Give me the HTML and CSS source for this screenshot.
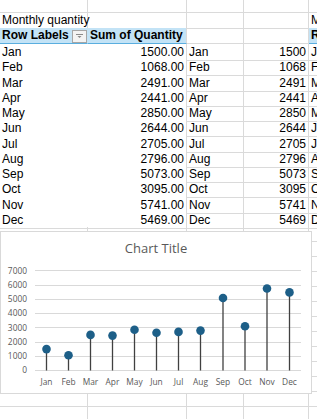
FILE: index.html
```html
<!DOCTYPE html>
<html lang="en">
<head>
    <meta charset="UTF-8">
    <meta name="viewport" content="width=device-width, initial-scale=1.0">
    <title>Monthly quantity</title>
    <link rel="stylesheet" href="styles.css">
</head>
<body>
    <div class="sheet">
        <div class="row top"><div class="cell"></div><div class="cell"></div><div class="cell"></div><div class="cell"></div><div class="cell"></div></div>
        <div class="row caption"><div class="cell">Monthly quantity</div><div class="cell"></div><div class="cell"></div><div class="cell"></div><div class="cell">Monthly quantity</div></div>
        <div class="row head">
            <div class="cell hd first">Row Labels<span class="drop"><svg width="7" height="5" viewBox="0 0 7 5"><rect x="0" y="0" width="7" height="1" fill="#8a8a8a"/><polygon points="1.5,2 5.5,2 3.5,4" fill="#8a8a8a"/></svg></span></div>
            <div class="cell hd">Sum of Quantity</div>
            <div class="cell"></div><div class="cell"></div>
            <div class="cell hd">Row Labels</div>
        </div>
        <div class="row data"><div class="cell pv">Jan</div><div class="cell pv num">1500.00</div><div class="cell">Jan</div><div class="cell num">1500</div><div class="cell">Jan</div></div>
        <div class="row data"><div class="cell pv">Feb</div><div class="cell pv num">1068.00</div><div class="cell">Feb</div><div class="cell num">1068</div><div class="cell">Feb</div></div>
        <div class="row data"><div class="cell pv">Mar</div><div class="cell pv num">2491.00</div><div class="cell">Mar</div><div class="cell num">2491</div><div class="cell">Mar</div></div>
        <div class="row data"><div class="cell pv">Apr</div><div class="cell pv num">2441.00</div><div class="cell">Apr</div><div class="cell num">2441</div><div class="cell">Apr</div></div>
        <div class="row data"><div class="cell pv">May</div><div class="cell pv num">2850.00</div><div class="cell">May</div><div class="cell num">2850</div><div class="cell">May</div></div>
        <div class="row data"><div class="cell pv">Jun</div><div class="cell pv num">2644.00</div><div class="cell">Jun</div><div class="cell num">2644</div><div class="cell">Jun</div></div>
        <div class="row data"><div class="cell pv">Jul</div><div class="cell pv num">2705.00</div><div class="cell">Jul</div><div class="cell num">2705</div><div class="cell">Jul</div></div>
        <div class="row data"><div class="cell pv">Aug</div><div class="cell pv num">2796.00</div><div class="cell">Aug</div><div class="cell num">2796</div><div class="cell">Aug</div></div>
        <div class="row data"><div class="cell pv">Sep</div><div class="cell pv num">5073.00</div><div class="cell">Sep</div><div class="cell num">5073</div><div class="cell">Sep</div></div>
        <div class="row data"><div class="cell pv">Oct</div><div class="cell pv num">3095.00</div><div class="cell">Oct</div><div class="cell num">3095</div><div class="cell">Oct</div></div>
        <div class="row data"><div class="cell pv">Nov</div><div class="cell pv num">5741.00</div><div class="cell">Nov</div><div class="cell num">5741</div><div class="cell">Nov</div></div>
        <div class="row data last"><div class="cell pv">Dec</div><div class="cell pv num">5469.00</div><div class="cell">Dec</div><div class="cell num">5469</div><div class="cell">Dec</div></div>
        <div class="row"><div class="cell"></div><div class="cell"></div><div class="cell"></div><div class="cell"></div><div class="cell"></div></div>
        <div class="row"><div class="cell"></div><div class="cell"></div><div class="cell"></div><div class="cell"></div><div class="cell"></div></div>
        <div class="row"><div class="cell"></div><div class="cell"></div><div class="cell"></div><div class="cell"></div><div class="cell"></div></div>
        <div class="row"><div class="cell"></div><div class="cell"></div><div class="cell"></div><div class="cell"></div><div class="cell"></div></div>
        <div class="row"><div class="cell"></div><div class="cell"></div><div class="cell"></div><div class="cell"></div><div class="cell"></div></div>
        <div class="row"><div class="cell"></div><div class="cell"></div><div class="cell"></div><div class="cell"></div><div class="cell"></div></div>
        <div class="row"><div class="cell"></div><div class="cell"></div><div class="cell"></div><div class="cell"></div><div class="cell"></div></div>
        <div class="row"><div class="cell"></div><div class="cell"></div><div class="cell"></div><div class="cell"></div><div class="cell"></div></div>
        <div class="row"><div class="cell"></div><div class="cell"></div><div class="cell"></div><div class="cell"></div><div class="cell"></div></div>
        <div class="row"><div class="cell"></div><div class="cell"></div><div class="cell"></div><div class="cell"></div><div class="cell"></div></div>
        <div class="row"><div class="cell"></div><div class="cell"></div><div class="cell"></div><div class="cell"></div><div class="cell"></div></div>
        <div class="row"><div class="cell"></div><div class="cell"></div><div class="cell"></div><div class="cell"></div><div class="cell"></div></div>
        <div class="row"><div class="cell"></div><div class="cell"></div><div class="cell"></div><div class="cell"></div><div class="cell"></div></div>

        <!-- chart floats over the cells like an Excel chart object -->
        <div class="chart">
            <svg width="312" height="163" viewBox="0 0 312 163">
                <text class="title" x="156" y="21.5" text-anchor="middle">Chart Title</text>
                <g stroke="#d9d9d9" stroke-width="1">
                    <line x1="35" y1="39.5" x2="301" y2="39.5"/>
                    <line x1="35" y1="54.5" x2="301" y2="54.5"/>
                    <line x1="35" y1="68.5" x2="301" y2="68.5"/>
                    <line x1="35" y1="82.5" x2="301" y2="82.5"/>
                    <line x1="35" y1="96.5" x2="301" y2="96.5"/>
                    <line x1="35" y1="111.5" x2="301" y2="111.5"/>
                    <line x1="35" y1="125.5" x2="301" y2="125.5"/>
                    <line x1="35" y1="139.5" x2="301" y2="139.5"/>
                </g>
                <g class="ylab" text-anchor="end">
                    <text x="27" y="42.5">7000</text>
                    <text x="27" y="57">6000</text>
                    <text x="27" y="71">5000</text>
                    <text x="27" y="85">4000</text>
                    <text x="27" y="99.5">3000</text>
                    <text x="27" y="113.5">2000</text>
                    <text x="27" y="128">1000</text>
                    <text x="27" y="142">0</text>
                </g>
                <g stroke="#404040" stroke-width="1.3">
                    <line x1="46.5" y1="139.5" x2="46.5" y2="118.1"/>
                    <line x1="68.5" y1="139.5" x2="68.5" y2="124.2"/>
                    <line x1="90.5" y1="139.5" x2="90.5" y2="103.9"/>
                    <line x1="112.5" y1="139.5" x2="112.5" y2="104.6"/>
                    <line x1="134.5" y1="139.5" x2="134.5" y2="98.8"/>
                    <line x1="156.5" y1="139.5" x2="156.5" y2="101.7"/>
                    <line x1="178.5" y1="139.5" x2="178.5" y2="100.9"/>
                    <line x1="200.5" y1="139.5" x2="200.5" y2="99.6"/>
                    <line x1="223" y1="139.5" x2="223" y2="67"/>
                    <line x1="245" y1="139.5" x2="245" y2="95.3"/>
                    <line x1="267" y1="139.5" x2="267" y2="57.5"/>
                    <line x1="289.5" y1="139.5" x2="289.5" y2="61.4"/>
                </g>
                <g fill="#1d5f88">
                    <circle cx="46.5" cy="118.1" r="4.3"/>
                    <circle cx="68.5" cy="124.2" r="4.3"/>
                    <circle cx="90.5" cy="103.9" r="4.3"/>
                    <circle cx="112.5" cy="104.6" r="4.3"/>
                    <circle cx="134.5" cy="98.8" r="4.3"/>
                    <circle cx="156.5" cy="101.7" r="4.3"/>
                    <circle cx="178.5" cy="100.9" r="4.3"/>
                    <circle cx="200.5" cy="99.6" r="4.3"/>
                    <circle cx="223" cy="67" r="4.3"/>
                    <circle cx="245" cy="95.3" r="4.3"/>
                    <circle cx="267" cy="57.5" r="4.3"/>
                    <circle cx="289.5" cy="61.4" r="4.3"/>
                </g>
                <g class="xlab" text-anchor="middle">
                    <text x="46.5" y="153.5">Jan</text>
                    <text x="68.5" y="153.5">Feb</text>
                    <text x="90.5" y="153.5">Mar</text>
                    <text x="112.5" y="153.5">Apr</text>
                    <text x="134.5" y="153.5">May</text>
                    <text x="156.5" y="153.5">Jun</text>
                    <text x="178.5" y="153.5">Jul</text>
                    <text x="200.5" y="153.5">Aug</text>
                    <text x="223" y="153.5">Sep</text>
                    <text x="245" y="153.5">Oct</text>
                    <text x="267" y="153.5">Nov</text>
                    <text x="289.5" y="153.5">Dec</text>
                </g>
            </svg>
        </div>
    </div>
</body>
</html>
```

FILE: styles.css
```css
body { margin: 0; overflow: hidden; background: #fff; color: #000; font-family: "Liberation Sans", Arial, sans-serif; font-size: 12px; }
.sheet { position: relative; width: 317px; height: 419px; overflow: hidden; }
.row { display: grid; grid-template-columns: 88px 99px 57px 65px 60px; height: 15px; }
.row.top { height: 13px; }
.row.head { height: 16px; }
.row.data { height: 15.25px; }
.cell { box-sizing: border-box; border-right: 1px solid #dadada; border-bottom: 1px solid #dadada; padding: 0 2px; line-height: 15px; white-space: nowrap; overflow: visible; }
.row.data .cell { line-height: 16px; }
.num { text-align: right; }
.hd { background: #c3e3f6; font-weight: bold; border-bottom-color: #5aaedf; line-height: 15px; }
.hd.first { display: flex; justify-content: space-between; align-items: flex-end; border-right-color: transparent; padding-right: 0; }
.drop { box-sizing: border-box; width: 15px; height: 13px; border: 1px solid #a6a6a6; background: #f3f3f3; display: flex; align-items: center; justify-content: center; }
.pv { border-bottom-color: transparent; }
.pv:first-child { border-right-color: transparent; }
.row.last .pv { border-bottom-color: #dadada; }
.caption .cell:first-child { overflow: visible; }
.chart { position: absolute; left: 0; top: 231px; width: 312px; height: 163px; box-sizing: border-box; background: #fff; border: 1px solid #d9d9d9; }
.chart svg { position: absolute; left: -1px; top: -1px; }
.title { font-family: "Open Sans", sans-serif; font-size: 13px; fill: #595959; }
.ylab, .xlab { font-family: "Open Sans", sans-serif; font-size: 8.4px; fill: #595959; }
```
